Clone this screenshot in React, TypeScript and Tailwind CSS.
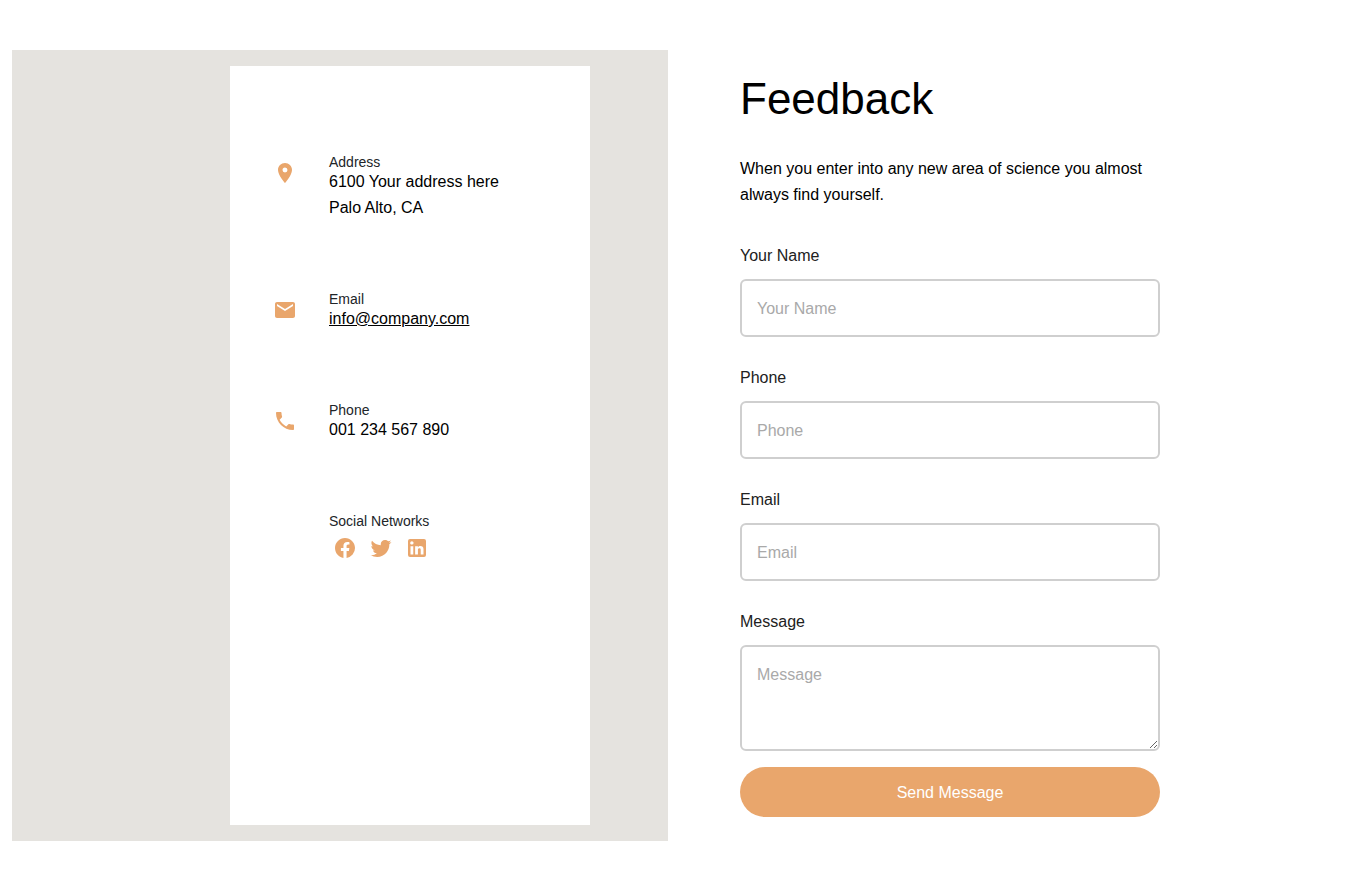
import { MdLocationOn, MdEmail, MdPhone } from "react-icons/md";
import type { ReactNode } from "react";

function ContactRow({ icon, label, children }: { icon?: ReactNode; label: string; children: ReactNode }) {
  return (
    <div className="flex items-start gap-8">
      <div className="mt-[6px] flex h-6 w-6 shrink-0 text-[#e9a66c]">{icon}</div>
      <div>
        <h2 className="text-sm leading-[14px] text-[#212529]">{label}</h2>
        {children}
      </div>
    </div>
  );
}

const socialLinks = [
  {
    name: "Facebook",
    href: "#facebook",
    path: "M12 2.04C6.5 2.04 2 6.53 2 12.06C2 17.06 5.66 21.21 10.44 21.96V14.96H7.9V12.06H10.44V9.85C10.44 7.34 11.93 5.96 14.22 5.96C15.31 5.96 16.45 6.15 16.45 6.15V8.62H15.19C13.95 8.62 13.56 9.39 13.56 10.18V12.06H16.34L15.89 14.96H13.56V21.96A10 10 0 0 0 22 12.06C22 6.53 17.5 2.04 12 2.04Z",
  },
  {
    name: "Twitter",
    href: "#twitter",
    path: "M22.46 6c-.77.35-1.6.58-2.46.69.88-.53 1.56-1.37 1.88-2.38-.83.5-1.75.85-2.72 1.05C18.37 4.5 17.26 4 16 4c-2.35 0-4.27 1.92-4.27 4.29 0 .34.04.67.11.98C8.28 9.09 5.11 7.38 3 4.79c-.37.63-.58 1.37-.58 2.15 0 1.49.75 2.81 1.91 3.56-.71 0-1.37-.2-1.95-.5v.03c0 2.08 1.48 3.82 3.44 4.21a4.22 4.22 0 0 1-1.93.07 4.28 4.28 0 0 0 4 2.98 8.521 8.521 0 0 1-5.33 1.84c-.34 0-.68-.02-1.02-.06C3.44 20.29 5.7 21 8.12 21 16 21 20.33 14.46 20.33 8.79c0-.19 0-.37-.01-.56.84-.6 1.56-1.36 2.14-2.23z",
  },
  {
    name: "LinkedIn",
    href: "#linkedin",
    path: "M19 3a2 2 0 0 1 2 2v14a2 2 0 0 1-2 2H5a2 2 0 0 1-2-2V5a2 2 0 0 1 2-2h14m-.5 15.5v-5.3a3.26 3.26 0 0 0-3.26-3.26c-.85 0-1.84.52-2.32 1.3v-1.11h-2.79v8.37h2.79v-4.93c0-.77.62-1.4 1.39-1.4a1.4 1.4 0 0 1 1.4 1.4v4.93h2.79M6.88 8.56a1.68 1.68 0 0 0 1.68-1.68c0-.93-.75-1.69-1.68-1.69a1.69 1.69 0 0 0-1.69 1.69c0 .93.76 1.68 1.69 1.68m1.39 9.94v-8.37H5.5v8.37h2.77z",
  },
];

const fieldClass =
  "block w-full rounded-md border-2 border-[#cfcfcf] bg-white px-[15px] text-base text-black placeholder:text-[#a9a9a9] focus:border-[#e9a66c] focus:outline-none";

function Field({ id, label, type }: { id: string; label: string; type: string }) {
  return (
    <div>
      <label htmlFor={id} className="mb-3 block leading-[22px] text-[#212121]">{label}</label>
      <input id={id} type={type} placeholder={label} className={`${fieldClass} h-[58px] pt-[2px]`} />
    </div>
  );
}

export default function App() {
  return (
    <main className="grid grid-cols-2 gap-6 bg-white px-3 py-[50px] font-['Liberation_Sans',Arial,sans-serif] text-base leading-[26px] text-black">
      <section className="flex justify-center bg-[#e5e3df] py-4 pl-[140px]">
        <div className="flex w-[360px] flex-col bg-white px-[43px] pt-[89px]">
          <div className="flex flex-col gap-[71px]">
            <ContactRow icon={<MdLocationOn size={24} />} label="Address">
              <p>6100 Your address here<br />Palo Alto, CA</p>
            </ContactRow>
            <ContactRow icon={<MdEmail size={24} />} label="Email">
              <a href="mailto:info@company.com" className="block underline">info@company.com</a>
            </ContactRow>
            <ContactRow icon={<MdPhone size={24} />} label="Phone">
              <p>001 234 567 890</p>
            </ContactRow>
            <ContactRow label="Social Networks">
              <div className="flex gap-3 px-1 pt-2 text-[#e9a66c]">
                {socialLinks.map((link) => (
                  <a key={link.name} href={link.href} aria-label={link.name}>
                    <svg viewBox="0 0 24 24" width="24" height="24" fill="currentColor">
                      <path d={link.path} />
                    </svg>
                  </a>
                ))}
              </div>
            </ContactRow>
          </div>
        </div>
      </section>
      <section className="px-12 py-6">
        <div className="max-w-[420px]">
          <h1 className="text-[44px] leading-[50px]">Feedback</h1>
          <p className="mt-8">When you enter into any new area of science you almost always find yourself.</p>
          <form className="mt-[37px] flex flex-col gap-[30px]" onSubmit={(e) => e.preventDefault()}>
            <Field id="name" label="Your Name" type="text" />
            <Field id="phone" label="Phone" type="tel" />
            <Field id="email" label="Email" type="email" />
            <div>
              <label htmlFor="message" className="mb-3 block leading-[22px] text-[#212121]">Message</label>
              <textarea id="message" placeholder="Message" className={`${fieldClass} h-[106px] resize-y py-[15px] leading-[26px]`} />
              <button type="submit" className="mt-4 h-[50px] w-full rounded-full bg-[#e9a66c] pt-[2px] text-white">Send Message</button>
            </div>
          </form>
        </div>
      </section>
    </main>
  );
}
